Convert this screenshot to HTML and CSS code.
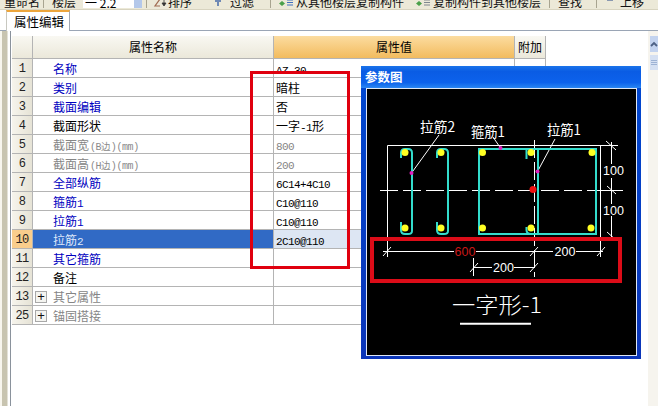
FILE: index.html
```html
<!DOCTYPE html>
<html lang="zh">
<head>
<meta charset="utf-8">
<title>属性编辑</title>
<link rel="stylesheet" href="styles.css">
</head>
<body>
<div class="page">
  <div class="toolbar">
    <span class="tb g4">重命名</span><i class="sep g3"></i>
    <span class="tb g8">楼层</span>
    <span class="combo g7">一 2.2</span><span class="combo-btn"></span><i class="sep g4"></i>
    <svg class="ico g6" width="15" height="10" viewBox="0 0 15 10"><path d="M2 1h5L2 8h5" fill="none" stroke="#a06a50" stroke-width="1.2"/><path d="M11 1v4M9 5h4l-2 3z" fill="#333" stroke="#333" stroke-width=".8"/></svg>
    <span class="tb g0">排序</span>
    <svg class="ico g23" width="6" height="10" viewBox="0 0 6 10"><path d="M0 0h6v4H4v4H2V4H0z" fill="#6f89b5"/></svg>
    <span class="tb g9">过滤</span><i class="sep g16"></i>
    <svg class="ico g8" width="15" height="10" viewBox="0 0 15 10"><path d="M3 3l3 2.500-3 2.500-3-2.500z" fill="#4aa04a"/><path d="M8 2h6M8 4.500h6M8 7h6" stroke="#4070c0" stroke-width="1.200"/></svg>
    <span class="tb g2">从其他楼层复制构件</span>
    <svg class="ico g12" width="15" height="10" viewBox="0 0 15 10"><path d="M3 3l3 2.500-3 2.500-3-2.500z" fill="#4aa04a"/><path d="M8 2h6M8 4.500h6M8 7h6" stroke="#808890" stroke-width="1.200"/></svg>
    <span class="tb g2">复制构件到其他楼层</span><i class="sep g8"></i>
    <span class="tb g8">查找</span><i class="sep g14"></i>
    <svg class="ico g10" width="6" height="10" viewBox="0 0 6 10"><path d="M0 0h6v3H0z" fill="#8a98b0"/></svg>
    <span class="tb g7">上移</span>
  </div>

  <div class="tabbar"><div class="tab">属性编辑</div></div>

  <div class="body">
    <div class="gutter"></div>
    <div class="gridwrap">
      <table class="grid">
        <colgroup><col class="c-n"><col class="c-name"><col class="c-val"><col class="c-ext"></colgroup>
        <thead>
          <tr class="head"><th class="rh"></th><th>属性名称</th><th class="on">属性值</th><th>附加</th></tr>
        </thead>
        <tbody>
          <tr><td class="rh">1</td><td class="nm blue">名称</td><td class="v"><span class="lat">AZ-30</span></td><td></td></tr>
          <tr><td class="rh">2</td><td class="nm blue">类别</td><td class="v">暗柱</td><td></td></tr>
          <tr><td class="rh">3</td><td class="nm blue">截面编辑</td><td class="v">否</td><td></td></tr>
          <tr><td class="rh">4</td><td class="nm">截面形状</td><td class="v">一字<span class="lat">-1</span>形</td><td></td></tr>
          <tr><td class="rh">5</td><td class="nm grey">截面宽<span class="small">(B边)(mm)</span></td><td class="v grey"><span class="lat">800</span></td><td></td></tr>
          <tr><td class="rh">6</td><td class="nm grey">截面高<span class="small">(H边)(mm)</span></td><td class="v grey"><span class="lat">200</span></td><td></td></tr>
          <tr><td class="rh">7</td><td class="nm blue">全部纵筋</td><td class="v"><span class="lat">6C14+4C10</span></td><td></td></tr>
          <tr><td class="rh">8</td><td class="nm blue">箍筋<span class="lat">1</span></td><td class="v"><span class="lat">C10@110</span></td><td></td></tr>
          <tr><td class="rh">9</td><td class="nm blue">拉筋<span class="lat">1</span></td><td class="v"><span class="lat">C10@110</span></td><td></td></tr>
          <tr class="sel"><td class="rh">10</td><td class="nm">拉筋<span class="lat">2</span></td><td class="v"><span class="lat">2C10@110</span></td><td></td></tr>
          <tr><td class="rh">11</td><td class="nm blue">其它箍筋</td><td class="v"></td><td></td></tr>
          <tr><td class="rh">12</td><td class="nm">备注</td><td class="v"></td><td></td></tr>
          <tr><td class="rh">13</td><td class="grp grey"><span class="plus">+</span>其它属性</td><td class="v"></td><td></td></tr>
          <tr><td class="rh">25</td><td class="grp grey"><span class="plus">+</span>锚固搭接</td><td class="v"></td><td></td></tr>
        </tbody>
      </table>
    </div>
    <div class="scroll">
      <div class="sbtn"><svg width="8" height="8" viewBox="0 0 8 8"><path d="M1 6l3-3 3 3" fill="none" stroke="#4d6185" stroke-width="1.800"/></svg></div>
      <div class="sthumb"><svg width="6" height="8" viewBox="0 0 6 8"><path d="M0 1.500h6M0 3.500h6M0 5.500h6" stroke="#9db2d4"/></svg></div>
    </div>
  </div>

  <div class="redbox left"></div>

  <div class="dialog">
    <div class="dlg-title">参数图</div>
    <div class="dlg-body">
      <svg class="fig" width="269" height="266" viewBox="367 89 269 266">
        <g fill="none" stroke="#fff" stroke-width="1">
          <path d="M387.500 145.500H600.500V238M387.500 145.500V238"/>
          <path d="M380 190.500H623" stroke-width="1.200" stroke-dasharray="18 5"/>
          <path d="M534.500 140V277" stroke-dasharray="18 4"/>
          <path d="M600 145.500H618M601 190.500H623M611.500 142V164M611.500 178V204M611.500 216V240"/>
          <path d="M606 141l10 9M607 186l9 8M607 232l9 8"/>
          <path d="M411.500 173L439 135M500.500 148L493 137M537.500 171.500L555 139"/>
          <path d="M383 251.500H454M476 251.500H553M576 251.500H603M473 267.500H492M514 267.500H534"/>
          <path d="M387.500 238V257M600.500 238V257M473.500 258V276"/>
          <path d="M383 256l8-9M530 256l8-9M597 256l8-9M470 272l8-9M530 272l8-9"/>
        </g>
        <g fill="none" stroke="#33dccc" stroke-width="2">
          <path d="M479 234V149H596V234ZM538 149V234"/>
          <path d="M526.500 159V149M526.500 227V230Q526.500 234 531 234"/>
          <path d="M401 158V153Q401 149 405 149H408Q412 149 412 153V231Q412 234 408 234H405Q401 234 401 230V222"/>
          <path d="M437 158V153Q437 149 441 149H444Q448 149 448 153V231Q448 234 444 234H441Q437 234 437 230V222"/>
        </g>
        <g fill="#ffff22">
          <circle cx="405" cy="152.500" r="3.500"/><circle cx="441" cy="152.500" r="3.500"/><circle cx="482.500" cy="152.500" r="3.500"/><circle cx="531" cy="152.500" r="3.500"/><circle cx="592" cy="152.500" r="3.500"/>
          <circle cx="405" cy="228" r="3.500"/><circle cx="441" cy="228" r="3.500"/><circle cx="482.500" cy="228" r="3.500"/><circle cx="531" cy="228" r="3.500"/><circle cx="591" cy="228" r="3.500"/>
        </g>
        <circle cx="533" cy="189.500" r="3.500" fill="#f01010"/>
        <g fill="#e020c0">
          <circle cx="411.500" cy="173" r="2"/><circle cx="500.500" cy="148" r="2"/><circle cx="537.500" cy="171.500" r="2"/>
        </g>
        <g class="lbl">
          <text x="420" y="132" textLength="35" lengthAdjust="spacingAndGlyphs">拉筋2</text>
          <text x="471" y="137" textLength="34" lengthAdjust="spacingAndGlyphs">箍筋1</text>
          <text x="547" y="135" textLength="34" lengthAdjust="spacingAndGlyphs">拉筋1</text>
        </g>
        <g class="dim">
          <text x="603" y="174.500">100</text>
          <text x="603" y="214.500">100</text>
          <text x="554.500" y="256">200</text>
          <text x="493" y="272">200</text>
          <text class="red" x="454.500" y="256">600</text>
        </g>
        <text class="big" x="452" y="313" textLength="90" lengthAdjust="spacingAndGlyphs">一字形-1</text>
        <path d="M460 323.800H531" stroke="#fff" stroke-width="2"/>
      </svg>
    </div>
  </div>

  <div class="redbox fig-box"></div>
</div>
</body>
</html>
```
FILE: styles.css
```css
* { box-sizing: border-box; }
html, body { margin: 0; padding: 0; background: #fff; }
body { font-family: "Noto Sans CJK SC", "Liberation Sans", sans-serif; font-size: 12px; color: #000; }
.page { position: relative; width: 658px; height: 406px; overflow: hidden; display: flex; flex-direction: column; }

.toolbar { height: 10px; flex: none; display: flex; align-items: flex-end; overflow: hidden; background: #ece9d8; border-bottom: 1px solid #d8d4c0; padding-bottom: 1px; }
.tb { flex: none; line-height: 13px; white-space: nowrap; color: #111; }
.sep { flex: none; width: 1px; height: 10px; background: #a8a490; }
.ico { flex: none; }
.combo { flex: none; width: 51px; height: 10px; background: #fff; line-height: 10px; padding-left: 2px; overflow: hidden; }
.combo-btn { flex: none; width: 8px; height: 10px; background: #b4c8ea; }
.g0 { margin-left: 0; } .g2 { margin-left: 2px; } .g3 { margin-left: 3px; } .g4 { margin-left: 4px; }
.g6 { margin-left: 6px; } .g7 { margin-left: 7px; } .g8 { margin-left: 8px; } .g9 { margin-left: 9px; }
.g10 { margin-left: 10px; } .g12 { margin-left: 12px; } .g14 { margin-left: 14px; } .g16 { margin-left: 16px; } .g23 { margin-left: 23px; }

.tabbar { height: 21px; flex: none; padding-left: 6px; border-bottom: 1px solid #9aa5b5; background: #fff; }
.tab { width: 64px; height: 21px; background: #fff; border-top: 2px solid #eda63c; border-right: 1px solid #a0a8b4; border-left: 1px solid #c8c8c0; font-size: 12.500px; line-height: 19px; padding-left: 7px; position: relative; }

.body { flex: 1; display: flex; min-height: 0; }
.gutter { flex: none; width: 11px; border-right: 1px solid #8a929c; background: linear-gradient(90deg, #f8f6ee 0 2px, #c8c4b0 2px 7px, #fff 8px); }
.gridwrap { flex: 1; padding: 5px 0 0 1px; }
.grid { table-layout: fixed; border-collapse: separate; border-spacing: 0; width: 534px; }
.c-n { width: 21px; } .c-name { width: 241px; } .c-val { width: 241px; } .c-ext { width: 31px; }
.grid th, .grid td { padding: 0; border-right: 1px solid #b4b4b4; border-bottom: 1px solid #b4b4b4; font-weight: 400; white-space: nowrap; overflow: hidden; }
.grid tbody tr { height: 19px; }
.grid td { height: 19px; line-height: 16px; padding-top: 1px; }
.grid .head { height: 23px; }
.grid .head th { height: 23px; line-height: 20px; background: linear-gradient(#f9f8f2, #ebe8da); }
.grid .head th.on { background: linear-gradient(#fcdca0, #f2bb5e); }
.grid .rh { text-align: center; background: linear-gradient(90deg, #f6f4ec, #e6e3d6); color: #222; font-family: "Liberation Mono", monospace; font-size: 12px; letter-spacing: -.6px; }
.nm { padding-left: 20px !important; }
.v { padding-left: 2px !important; }
.grp { padding-left: 2px !important; }
.blue { color: #0000c0; }
.grey { color: #858585; }
.lat { font-family: "Liberation Mono", monospace; font-size: 11px; letter-spacing: -.6px; line-height: 10px; }
.small { font-family: "Liberation Mono", monospace; font-size: 10px; letter-spacing: -.4px; margin-left: 1px; color: #8a8a8a; line-height: 10px; }
.plus { display: inline-flex; width: 12px; height: 12px; margin-right: 6px; border: 1px solid #a8a8a8; background: #f4f4f0; color: #111; align-items: center; justify-content: center; font-family: "Liberation Sans", sans-serif; font-size: 13px; line-height: 10px; vertical-align: top; margin-top: 2px; }
.sel .nm { background: #316ac5; color: #dfe8fa; }
.sel .v { background: #dde6f3; }
.grid .sel .rh { background: #f9cd8c; }

.scroll { flex: none; width: 10px; padding: 5px 0 0 2px; background: #f6f4ee; }
.sbtn { height: 16px; background: #c3d3ef; display: flex; align-items: center; justify-content: center; }
.sthumb { height: 15px; margin-top: 3px; background: #d5e0f2; display: flex; align-items: center; justify-content: center; }

.dialog { position: absolute; left: 361px; top: 66px; width: 280px; height: 293px; display: flex; flex-direction: column; padding: 0 4px 4px 5px; background: linear-gradient(#0a5fe0, #0046cf 8%, #0b35b8); }
.dlg-title { height: 22px; flex: none; margin: 0 -4px 0 -5px; padding: 3px 0 0 4px; color: #fff; font-weight: 700; font-size: 12.500px; line-height: 16px; background: linear-gradient(#1a74ea, #0a5ce4 25%, #0c62ec 75%, #2a86f2); }
.dlg-body { flex: 1; border: 1px solid #dfe8f6; background: #000; }
.fig { display: block; }
.fig text { font-family: "Noto Sans CJK SC", "Liberation Sans", sans-serif; fill: #fff; }
.lbl text { font-size: 14px; }
.fig .dim text { font-family: "Liberation Sans", sans-serif; font-size: 12.500px; }
.fig .dim .red { fill: #c81818; }
.fig .big { font-size: 22px; font-weight: 300; }

.redbox { position: absolute; border: 3px solid #e0000f; }
.redbox.left { left: 250px; top: 71px; width: 100px; height: 198px; }
.redbox.fig-box { left: 370px; top: 237px; width: 252px; height: 46px; border-width: 4px; border-color: #dc0c18; }
```
